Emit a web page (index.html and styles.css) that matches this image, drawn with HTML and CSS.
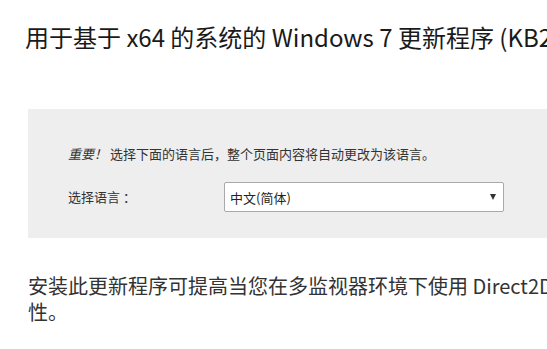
FILE: index.html
```html
<!DOCTYPE html>
<html lang="zh-CN">
<head>
<meta charset="utf-8">
<title>用于基于 x64 的系统的 Windows 7 更新程序</title>
<link rel="stylesheet" href="styles.css">
</head>
<body>
<div class="page">
  <h1 class="title">用于基于 x64 的系统的 Windows 7 更新程序 (KB2670838)</h1>
  <section class="lang-panel">
    <p class="notice"><em>重要！</em> 选择下面的语言后，整个页面内容将自动更改为该语言。</p>
    <div class="lang-row">
      <label class="lang-label" for="lang">选择语言 ：</label>
      <span class="select-wrap">
        <select id="lang" class="lang-select">
          <option>中文(简体)</option>
          <option>English</option>
        </select>
      </span>
    </div>
  </section>
  <p class="desc">安装此更新程序可提高当您在多监视器环境下使用 Direct2D 和 Direct3D 应用程序时的性能和稳定<br>性。</p>
</div>
</body>
</html>
```

FILE: styles.css
```css
html, body {
  margin: 0;
  padding: 0;
  background: #ffffff;
  overflow: hidden;
}

body {
  font-family: "Noto Sans CJK SC", "Noto Sans", sans-serif;
  color: #333333;
}

.page {
  width: 1000px;
  padding-left: 28px;
}

.title {
  margin: 21px 0 0 -3px;
  font-size: 24px;
  line-height: 32px;
  font-weight: 400;
  color: #1a1a1a;
  white-space: nowrap;
}

.lang-panel {
  margin-top: 56px;
  background: #eeeeee;
  padding: 35px 40px 26px;
}

.notice {
  margin: 0;
  font-size: 13px;
  line-height: 20px;
  color: #333333;
}

.notice em {
  font-style: italic;
}

.lang-row {
  display: flex;
  align-items: center;
  margin-top: 18px;
}

.lang-label {
  width: 156px;
  font-size: 13px;
  line-height: 20px;
  color: #333333;
}

.select-wrap {
  position: relative;
  display: block;
  width: 280px;
}

.select-wrap::after {
  content: "";
  position: absolute;
  right: 8px;
  top: 12px;
  width: 0;
  height: 0;
  border-left: 3px solid transparent;
  border-right: 3px solid transparent;
  border-top: 6px solid #333333;
  pointer-events: none;
}

.lang-select {
  appearance: none;
  -webkit-appearance: none;
  display: block;
  width: 280px;
  height: 30px;
  margin: 0;
  padding: 0 24px 0 5px;
  border: 1px solid #a9a9a9;
  border-radius: 2px;
  background: #ffffff;
  font-family: "Noto Sans CJK SC", "Noto Sans", sans-serif;
  font-size: 13px;
  color: #222222;
}

.desc {
  margin: 35px 0 0;
  font-size: 20px;
  line-height: 26px;
  color: #333333;
}
```
